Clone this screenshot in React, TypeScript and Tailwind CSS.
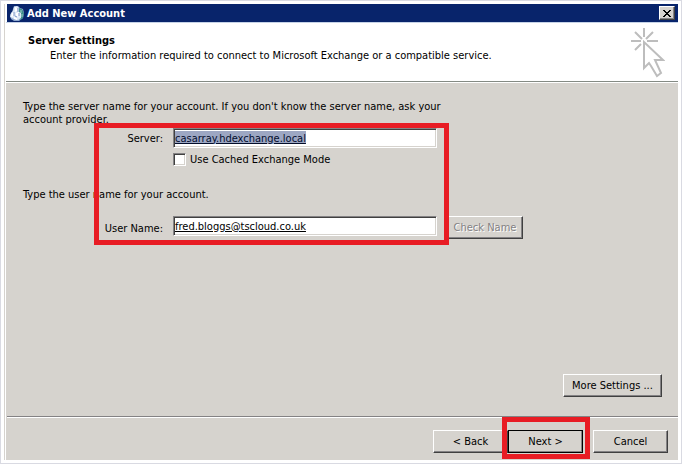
import type { ButtonHTMLAttributes } from 'react';

const raised =
  'h-[23px] border border-t-white border-l-white border-r-[#404040] border-b-[#404040] bg-[#d6d3ce] shadow-[inset_-1px_-1px_0_#848284] text-center whitespace-nowrap';
const sunken =
  'h-5 w-[264px] border border-t-[#848284] border-l-[#848284] border-r-white border-b-white bg-white px-px shadow-[inset_1px_1px_0_#404040,inset_-1px_-1px_0_#d6d3ce] underline underline-offset-1 outline-none';

function Button({ className = '', ...rest }: ButtonHTMLAttributes<HTMLButtonElement>) {
  return <button type="button" className={`${raised} ${className}`} {...rest} />;
}

function AccountIcon() {
  return (
    <svg viewBox="0 0 16 17" className="h-[17px] w-4" aria-hidden="true">
      <path d="M5 1h4l2 2 3 1 1 4-1 5-4 3H5l-3-2-1-4 2-3z" fill="#8fa9cf" />
      <path d="M10 3l3 1 2 4-1 5-3 2-2-4z" fill="#3f8f8c" />
      <path d="M5 2l3-1 2 2v4l2 1v5l-3 2-4-1-4-2 1-4 2-2z" fill="#dde8f6" />
      <path d="M6 2l2 1v3L6 7zM3 8l2-1v4l-3 1zM7 8l3-1v4l-3 1zM5 12l3 1v2l-3-1z" fill="#ffffff" />
      <path d="M5 7v4M9 3v4M6 11l2 1M10 8v3" stroke="#7a93c4" fill="none" />
      <path d="M12 5v3M13 9v3" stroke="#9fd0c6" fill="none" />
    </svg>
  );
}

function ClickCursor() {
  return (
    <svg viewBox="0 0 34 50" className="h-[50px] w-[34px]" fill="none" stroke="#bdbdbd" strokeWidth="2" aria-hidden="true">
      <path d="M13 0v9M4 4l7 7M22 4l-7 7M0 13h10M16 13h11M10 16l-6 6" />
      <path d="M20 38l6 10 4-3-6-13h8L13 14v26l5-5z" />
    </svg>
  );
}

export default function App() {
  return (
    <div className="flex min-h-screen flex-col border border-[#d9dae2] bg-white p-[3px] font-['DejaVu_Sans_Condensed','DejaVu_Sans',sans-serif] text-[11px] leading-[13px] text-black">
      <div className="flex flex-1 flex-col border-l border-[#d6d3ce] pl-px">
        <header className="ml-px flex h-[18px] items-center gap-[2px] bg-[#08246b] pr-[3px] pl-[2px]">
          <AccountIcon />
          <h1 className="flex-1 font-bold text-white">Add New Account</h1>
          <button
            type="button"
            aria-label="Close"
            className="flex h-[14px] w-4 items-center justify-center border border-t-white border-l-white border-r-[#404040] border-b-[#404040] bg-[#d6d3ce] shadow-[inset_-1px_-1px_0_#848284]"
          >
            <svg viewBox="0 0 8 7" className="h-[7px] w-2" shapeRendering="crispEdges" aria-hidden="true">
              <path d="M0 0h2v1h1v1h2V1h1V0h2v1H7v1H6v1H5v1h1v1h1v1h1v1H6V6H5V5H3v1H2v1H0V6h1V5h1V4h1V3H2V2H1V1H0z" fill="#000" />
            </svg>
          </button>
        </header>

        <section className="flex h-[60px] items-start justify-between border-t border-b border-t-[#c6d3e7] border-b-[#848a84] pr-[13px] pl-[22px]">
          <div className="pt-[11px]">
            <h2 className="font-bold">Server Settings</h2>
            <p className="mt-[2px] pl-[22px]">
              Enter the information required to connect to Microsoft Exchange or a compatible service.
            </p>
          </div>
          <div className="pt-[5px]">
            <ClickCursor />
          </div>
        </section>

        <main className="mt-px flex flex-1 flex-col bg-[#d6d3ce]">
          <form className="flex flex-1 flex-col" onSubmit={(e) => e.preventDefault()}>
            <div className="pt-[17px] pl-[17px]">
              <p className="w-[430px]">
                Type the server name for your account. If you don't know the server name, ask your account provider.
              </p>
              <div className="relative mt-[2px]">
                <div className="flex items-center">
                  <label htmlFor="server" className="w-[150px] pr-[10px] text-right">Server:</label>
                  <div className="relative flex">
                    <input id="server" className={sunken} defaultValue="casarray.hdexchange.local" />
                    <span
                      className="pointer-events-none absolute top-[3px] left-[2px] bg-[#0a246a]/40 text-transparent select-none"
                      aria-hidden="true"
                    >
                      casarray.hdexchange.local
                    </span>
                  </div>
                </div>
                <label className="mt-[5px] ml-[150px] flex w-fit items-center gap-1">
                  <input
                    type="checkbox"
                    className="h-[13px] w-[13px] appearance-none border border-t-[#848284] border-l-[#848284] border-r-white border-b-white bg-white shadow-[inset_1px_1px_0_#404040,inset_-1px_-1px_0_#d6d3ce] checked:bg-[#08246b]"
                  />
                  Use Cached Exchange Mode
                </label>
                <p className="mt-[22px]">Type the user name for your account.</p>
                <div className="mt-[15px] flex items-start">
                  <label htmlFor="user" className="w-[150px] pt-[6px] pr-[10px] text-right">User Name:</label>
                  <input id="user" className={sunken} defaultValue="fred.bloggs@tscloud.co.uk" />
                  <Button disabled className="ml-[10px] w-[76px] text-[#848284] [text-shadow:1px_1px_0_white]">
                    Check Name
                  </Button>
                </div>
                <div className="pointer-events-none absolute -top-[5px] left-[71px] h-[122px] w-[355px] border-5 border-[#e81c24]" />
              </div>
            </div>
            <div className="mt-auto flex justify-end pr-4 pb-[19px]">
              <Button className="w-[99px]">More Settings ...</Button>
            </div>
          </form>
          <footer className="ml-px flex justify-end border-t border-[#848284] pr-[10px] pb-[7px] shadow-[inset_0_1px_0_white]">
            <div className="flex pt-[13px]">
              <Button className="w-[75px]">&lt; Back</Button>
              <div className="relative">
                <Button className="w-[75px] outline outline-black -outline-offset-1">Next &gt;</Button>
                <div className="pointer-events-none absolute -top-[13px] -left-[6px] h-[42px] w-[88px] border-5 border-[#e81c24]" />
              </div>
              <Button className="ml-[10px] w-[75px]">Cancel</Button>
            </div>
          </footer>
        </main>
      </div>
    </div>
  );
}
